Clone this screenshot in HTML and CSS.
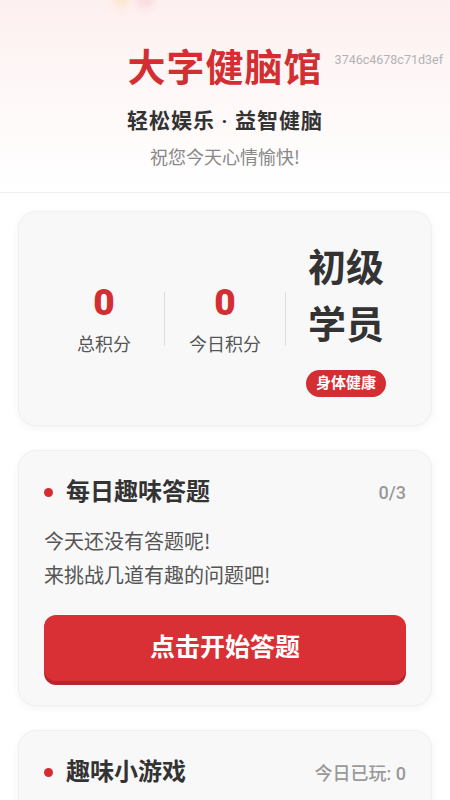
FILE: index.html
```html
<html>
<head><meta http-equiv="Content-Type" content="text/html; charset=utf-8">
<link rel="stylesheet" href="styles.css">
</head>
<body>
<div class="top">
  <div class="blob yellow"></div>
  <div class="blob pink"></div>
  <div class="hash">3746c4678c71d3ef</div>
  <h1 class="title">大字健脑馆</h1>
  <div class="sub">轻松娱乐 · 益智健脑</div>
  <div class="wish">祝您今天心情愉快!</div>
</div>

<div class="page">
  <div class="card stats">
    <div class="stat">
      <div class="num">0</div>
      <div class="lbl">总积分</div>
    </div>
    <div class="sep"></div>
    <div class="stat">
      <div class="num">0</div>
      <div class="lbl">今日积分</div>
    </div>
    <div class="sep"></div>
    <div class="stat">
      <div class="level">初级<br>学员</div>
      <div class="badge">身体健康</div>
    </div>
  </div>

  <div class="card box">
    <div class="head">
      <div class="name"><span class="dot"></span>每日趣味答题</div>
      <div class="count">0/3</div>
    </div>
    <div class="txt">今天还没有答题呢!<br>来挑战几道有趣的问题吧!</div>
    <div class="btn">点击开始答题</div>
  </div>

  <div class="card box">
    <div class="head">
      <div class="name"><span class="dot"></span>趣味小游戏</div>
      <div class="count">今日已玩: 0</div>
    </div>
    <div class="txt">今天还没有玩游戏呢!<br>来放松一下吧!</div>
  </div>
</div>
</body>
</html>
```

FILE: styles.css
```css
body {
	margin: 0;
	background: #ffffff;
	font-family: Roboto, "Noto Sans CJK SC", sans-serif;
	color: #333333;
}
.top {
	position: relative;
	text-align: center;
	padding: 43px 0 24px 0;
	background: linear-gradient(#fdf0f0, #ffffff);
	border-bottom: 1px solid #eeeeee;
	overflow: hidden;
}
.blob {
	position: absolute;
	top: -7px;
	width: 18px;
	height: 15px;
	border-radius: 50%;
	filter: blur(4px);
	opacity: 0.7;
}
.blob.yellow { left: 112px; background: #fbe3c0; }
.blob.pink { left: 136px; background: #f9cfd6; }
.hash {
	position: absolute;
	top: 52px;
	right: 7px;
	font-size: 12.5px;
	line-height: 16px;
	color: #b3b3b3;
}
.title {
	margin: 0;
	font-size: 38px;
	line-height: 50px;
	font-weight: bold;
	letter-spacing: 1px;
	color: #d32f33;
}
.sub {
	margin-top: 13px;
	font-size: 21px;
	line-height: 30px;
	font-weight: bold;
	letter-spacing: 1px;
	color: #333333;
}
.wish {
	margin-top: 8px;
	font-family: "Noto Sans CJK SC", sans-serif;
	font-size: 18px;
	line-height: 24px;
	color: #888888;
}
.page {
	padding: 18px 18px 0 18px;
}
.card {
	background: #f8f8f8;
	border: 1px solid #f0f0f0;
	border-radius: 18px;
	box-shadow: 0 2px 8px rgba(0, 0, 0, 0.05);
	margin-bottom: 24px;
}
.stats {
	display: flex;
	align-items: center;
	padding: 28px 25px;
}
.stat {
	flex: 1;
	display: flex;
	flex-direction: column;
	align-items: center;
}
.sep {
	width: 1px;
	height: 54px;
	background: #dddddd;
}
.num {
	font-size: 37px;
	line-height: 43px;
	font-weight: 900;
	color: #d32f33;
}
.lbl {
	margin-top: 8px;
	font-size: 18px;
	line-height: 25px;
	color: #555555;
}
.level {
	font-size: 38px;
	line-height: 57px;
	font-weight: bold;
	color: #333333;
}
.badge {
	margin-top: 16px;
	padding: 0 10px;
	height: 27px;
	line-height: 27px;
	border-radius: 14px;
	background: #d32f33;
	color: #ffffff;
	font-size: 15px;
	font-weight: bold;
}
.box {
	padding: 24px 25px;
}
.head {
	display: flex;
	justify-content: space-between;
	align-items: center;
}
.name {
	display: flex;
	align-items: center;
	font-size: 24px;
	line-height: 34px;
	font-weight: bold;
	color: #333333;
}
.dot {
	width: 9px;
	height: 9px;
	border-radius: 50%;
	background: #d32f33;
	margin: 0 13px 0 0;
}
.count {
	font-size: 18px;
	font-weight: 500;
	color: #999999;
}
.txt {
	margin-top: 15px;
	font-family: "Noto Sans CJK SC", sans-serif;
	font-size: 20px;
	line-height: 34px;
	color: #555555;
}
.btn {
	margin-top: 23px;
	height: 66px;
	line-height: 66px;
	border-radius: 12px;
	background: #d93036;
	box-shadow: 0 4px 0 #b3262b;
	text-align: center;
	color: #ffffff;
	font-size: 25px;
	font-weight: bold;
}
```
